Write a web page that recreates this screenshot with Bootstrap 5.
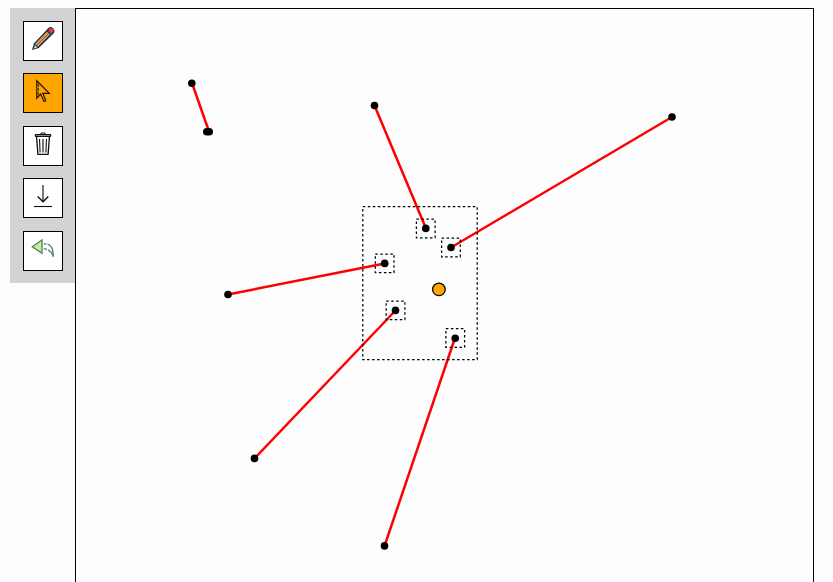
<!DOCTYPE html>
<html lang="en">
<head>
<meta charset="utf-8">
<meta name="viewport" content="width=device-width, initial-scale=1">
<title>Line editor</title>
<link href="https://cdn.jsdelivr.net/npm/bootstrap@5.3.0/dist/css/bootstrap.min.css" rel="stylesheet">
<style>
body { background: #fdfdfd; padding: 8px 19px 0 10px; }
.tool-panel { background: #d3d3d3; width: 65px; height: 275px; padding: 12.8px 12px 0 13px; gap: 12.5px; }
.tool-btn, .tool-btn:hover { width: 40px; height: 40px; border: 1px solid #000; border-radius: 0; background: #fff; }
.tool-btn.active, .tool-btn.active:hover { background: orange; border-color: #000; }
.tool-btn svg { display: block; width: 40px; height: 40px; margin: -1px; }
.drawing { height: calc(100vh - 8px); border: 1px solid #000; border-bottom: 0; background: #fdfdfd; }
.drawing svg { display: block; }
</style>
<script src="https://cdn.jsdelivr.net/npm/bootstrap@5.3.0/dist/js/bootstrap.bundle.min.js"></script>
</head>
<body class="vh-100 overflow-hidden">
<main class="d-flex align-items-start">
  <div class="tool-panel d-flex flex-column flex-shrink-0" role="toolbar">
    <button class="btn tool-btn p-0 flex-shrink-0" aria-label="Draw">
      <svg viewBox="0 0 40 40">
        <path d="M9 29l2-6.8L25.2 7.2q2.8-2.3 5.1.2t.2 5.1L15.8 27z" fill="#17324d"/>
        <path d="M12.2 23.4L24.3 11l2.6 2.6L15.2 25.4z" fill="#f39a44"/>
        <path d="M12.7 22.6L23.8 11.3" stroke="#b9aa91" stroke-width=".8"/>
        <path d="M13.6 24.6L25.8 12.2" stroke="#4c4038" stroke-width=".7"/>
        <path d="M11.8 24.2l2.6 2.1-3.4 1.1z" fill="#dce1dc"/>
        <path d="M24.9 9.3l3.7 3.7" stroke="#8da5b5" stroke-width=".6"/>
        <circle cx="28.3" cy="9.4" r="2.3" fill="#ff333c"/>
      </svg>
    </button>
    <button class="btn tool-btn active p-0 flex-shrink-0" aria-label="Select">
      <svg viewBox="0 0 40 40" fill="none" stroke="#1c1200" stroke-width="1.2">
        <path d="M13.8 7.8V25.2L17.7 21l3 7q1.2 1 2-.6L19.9 20.4H26.3z"/>
        <path d="M15.4 11v11" stroke-dasharray="3 1" stroke-width=".8"/>
      </svg>
    </button>
    <button class="btn tool-btn p-0 flex-shrink-0" aria-label="Delete">
      <svg viewBox="0 0 40 40" fill="none" stroke="#111">
        <path d="M18 8.3V7h4v1.3" stroke-width="1"/>
        <rect x="12.3" y="8.6" width="15.4" height="1.8" rx=".7" fill="#fff" stroke-width="1.2"/>
        <path d="M13.6 11l1.3 17.4h10.2L26.4 11" stroke-width="1.3"/>
        <path d="M16.5 13l.6 13.5M23.5 13l-.6 13.5" stroke-width="1.1"/>
        <path d="M20 13v13.5" stroke="#777" stroke-width="2"/>
      </svg>
    </button>
    <button class="btn tool-btn p-0 flex-shrink-0" aria-label="Download">
      <svg viewBox="0 0 40 40" fill="none" stroke="#111">
        <path d="M20 7v17" stroke="#777" stroke-width="2"/>
        <path d="M14.7 18.4L20 23.7l5.3-5.3" stroke-width="1.4"/>
        <path d="M11 28.5h18" stroke-width="1.1"/>
      </svg>
    </button>
    <button class="btn tool-btn p-0 flex-shrink-0" aria-label="Undo">
      <svg viewBox="0 0 40 40" fill="none" stroke="#4f8065" stroke-width="1.3">
        <path d="M9.2 15.7L19 8.9v13.4z" fill="#c8ee9b"/>
        <path d="M20.8 12.8h2.6M24.5 13q6.2 2.2 5.8 12.8q-1.2-5-5.2-7M24 18.3l-3.2-.6"/>
      </svg>
    </button>
  </div>
  <div class="drawing flex-grow-1 overflow-hidden">
    <svg class="w-100 h-100" viewBox="76 9 737 573" preserveAspectRatio="xMinYMin slice">
      <path stroke="red" stroke-width="2.5" d="M192 83L209 131.5M374.5 105.5L426 228.5M672 117L451 247.5M228 294.5L384.5 263.5M254.5 458.5L395.5 310.5M384.5 546L455 338"/>
      <g>
        <circle cx="191.8" cy="83.2" r="3.8"/><circle cx="206.8" cy="131.8" r="3.8"/><circle cx="209.2" cy="131.8" r="3.8"/>
        <circle cx="374.5" cy="105.5" r="3.8"/><circle cx="425.8" cy="228.4" r="3.8"/>
        <circle cx="672" cy="117" r="3.8"/><circle cx="451" cy="247.5" r="3.8"/>
        <circle cx="228" cy="294.5" r="3.8"/><circle cx="384.7" cy="263.4" r="3.8"/>
        <circle cx="254.5" cy="458.4" r="3.8"/><circle cx="395.5" cy="310.4" r="3.8"/>
        <circle cx="384.5" cy="545.9" r="3.8"/><circle cx="455.2" cy="338.2" r="3.8"/>
      </g>
      <g fill="none" stroke="#000" stroke-width="1.25" stroke-dasharray="2.5 2.5">
        <rect x="362.8" y="206.6" width="114.4" height="153"/>
        <rect x="416.4" y="219.1" width="18.7" height="18.7"/>
        <rect x="441.6" y="238.1" width="18.7" height="18.7"/>
        <rect x="375.3" y="254" width="18.7" height="18.7"/>
        <rect x="386.2" y="301" width="18.7" height="18.7"/>
        <rect x="445.9" y="328.6" width="18.7" height="18.7"/>
      </g>
      <circle cx="438.9" cy="289.4" r="6.3" fill="orange" stroke="#000" stroke-width="1.25"/>
    </svg>
  </div>
</main>
</body>
</html>
